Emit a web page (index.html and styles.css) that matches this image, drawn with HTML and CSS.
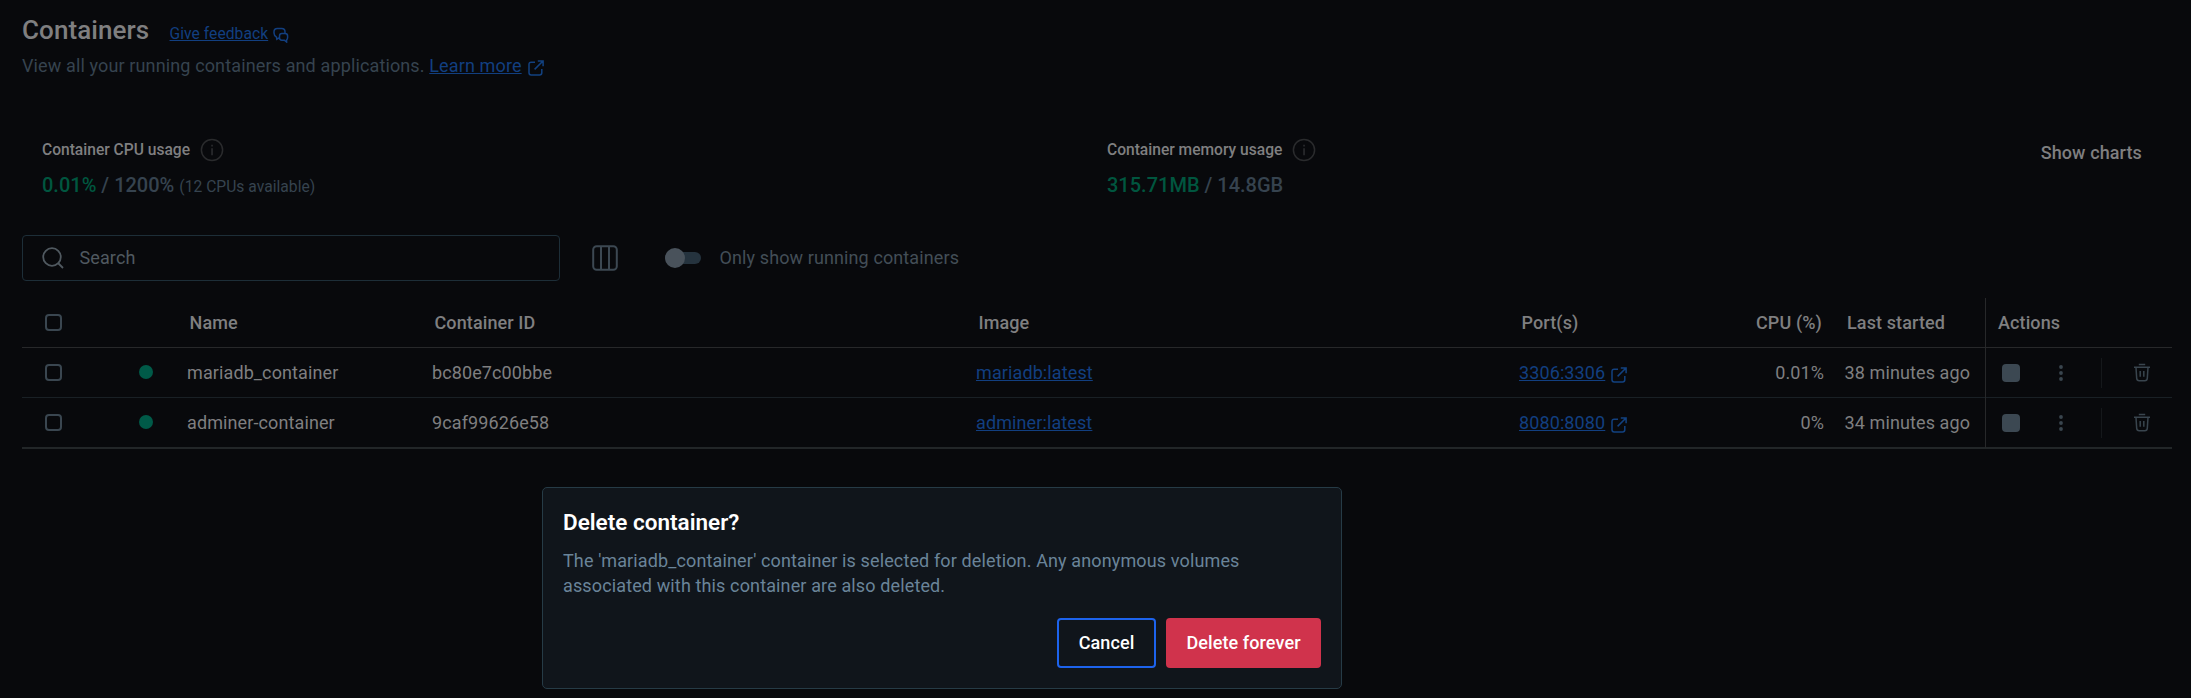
FILE: index.html
```
<!DOCTYPE html>
<html lang="en">
<head>
<meta charset="utf-8">
<title>Containers</title>
<link rel="stylesheet" href="styles.css">
</head>
<body>
<svg class="defs" width="0" height="0">
  <symbol id="external" viewBox="0 0 16 16" fill="none" stroke="currentColor" stroke-width="1.5"><path d="M7 2.2H3.2Q1 2.2 1 4.4V12.8Q1 15 3.2 15H11.6Q13.8 15 13.8 12.8V9M9.8 .9H15.1V6.2M15 1L6.6 9.4"/></symbol>
  <symbol id="info" viewBox="0 0 24 24"><circle cx="12" cy="12" r="10.6" fill="none" stroke="currentColor" stroke-width="1.5"/><path fill="currentColor" d="M11.2 10.2h1.7v7h-1.7zM11.2 6.8h1.7v1.8h-1.7z"/></symbol>
  <symbol id="trash" viewBox="0 0 18 20" fill="none" stroke="currentColor" stroke-width="1.5"><path d="M1 4.2H17M5.8 1.6H12.2M3 4.5L3.7 15.4Q3.9 17.7 6.2 17.7H11.8Q14.1 17.7 14.3 15.4L15 4.5M7.2 8V13.7M10.8 8V13.7"/></symbol>
  <symbol id="dots" viewBox="0 0 6 18" fill="currentColor"><circle cx="3" cy="3" r="1.9"/><circle cx="3" cy="9" r="1.9"/><circle cx="3" cy="15" r="1.9"/></symbol>
</svg>
<main class="page">
  <header class="heading">
    <h1>Containers</h1>
    <a class="feedback">Give feedback</a>
    <svg class="feedback-icon" viewBox="0 0 16 16" fill="none" stroke="currentColor" stroke-width="1.5"><path d="M6 10.8L3.8 12.2L3.5 10.2Q1 8.6 1 6V4.8Q1 1.5 4.3 1.5H8.8Q12 1.5 12 4.8V6M8.8 6.6H12.2Q14.6 6.6 14.6 9V10.6Q14.6 12.2 13.6 12.8V15L11.4 13.2H8.8Q6.5 13.2 6.5 10.8V9Q6.5 6.6 8.8 6.6Z"/></svg>
  </header>
  <p class="subtitle">View all your running containers and applications. <a>Learn more</a><svg class="ext"><use href="#external"/></svg></p>

  <section class="stats">
    <div class="stat cpu">
      <div class="stat-label">Container CPU usage<svg class="info"><use href="#info"/></svg></div>
      <div class="stat-value"><b>0.01%</b> / 1200% <small>(12 CPUs available)</small></div>
    </div>
    <div class="stat mem">
      <div class="stat-label">Container memory usage<svg class="info"><use href="#info"/></svg></div>
      <div class="stat-value"><b>315.71MB</b> / 14.8GB</div>
    </div>
    <div class="show-charts">Show charts</div>
  </section>

  <section class="toolbar">
    <div class="search">
      <svg width="22" height="22" viewBox="0 0 22 22" fill="none" stroke="currentColor" stroke-width="1.8"><circle cx="10" cy="10" r="8.8"/><path d="M16 16L21 21"/></svg>
      <span>Search</span>
    </div>
    <svg class="columns" width="26" height="26" viewBox="0 0 26 26" fill="none" stroke="currentColor" stroke-width="2"><rect x="1.2" y="1.2" width="23.6" height="23.6" rx="3.5"/><path d="M9 1.5V24.5M17 1.5V24.5"/></svg>
    <div class="toggle"><i></i></div>
    <span class="toggle-label">Only show running containers</span>
  </section>

  <section class="table">
    <div class="row head">
      <div class="check"><i></i></div><div></div><div>Name</div><div>Container ID</div><div>Image</div><div>Port(s)</div><div class="num">CPU (%)</div><div class="started">Last started</div><div class="actions">Actions</div>
    </div>
    <div class="row">
      <div class="check"><i></i></div><div class="status"><i></i></div><div>mariadb_container</div><div>bc80e7c00bbe</div><div><a>mariadb:latest</a></div><div><a>3306:3306</a><svg class="ext"><use href="#external"/></svg></div><div class="num">0.01%</div><div class="started">38 minutes ago</div>
      <div class="actions"><i class="stop"></i><svg class="more"><use href="#dots"/></svg><i class="sep"></i><svg class="trash"><use href="#trash"/></svg></div>
    </div>
    <div class="row last">
      <div class="check"><i></i></div><div class="status"><i></i></div><div>adminer-container</div><div>9caf99626e58</div><div><a>adminer:latest</a></div><div><a>8080:8080</a><svg class="ext"><use href="#external"/></svg></div><div class="num">0%</div><div class="started">34 minutes ago</div>
      <div class="actions"><i class="stop"></i><svg class="more"><use href="#dots"/></svg><i class="sep"></i><svg class="trash"><use href="#trash"/></svg></div>
    </div>
  </section>
</main>

<div class="dialog" role="dialog">
  <h2>Delete container?</h2>
  <p>The 'mariadb_container' container is selected for deletion. Any anonymous volumes<br>associated with this container are also deleted.</p>
  <div class="buttons"><button class="cancel">Cancel</button><button class="delete">Delete forever</button></div>
</div>
</body>
</html>
```
FILE: styles.css
```
* { box-sizing: border-box; }
body {
  margin: 0;
  height: 698px;
  overflow: hidden;
  background: #08090c;
  color: #7f7f80;
  font: 18px/25px Roboto, sans-serif;
  letter-spacing: .11px;
}
svg { display: block; flex: none; }
.defs { position: absolute; }
h1, h2, p { margin: 0; }
a { color: #123f80; text-decoration: underline; text-underline-offset: 1px; text-decoration-thickness: 1px; }

.page { padding: 14px 19px 0 22px; }
.heading { display: flex; height: 38px; align-items: flex-start; }
h1 { font-size: 26px; line-height: 32px; font-weight: 500; width: 147.5px; letter-spacing: .08px; }
.feedback { font-size: 15.6px; line-height: 20px; margin-top: 10px; letter-spacing: .06px; }
.feedback-icon { width: 16px; height: 16px; margin: 13px 0 0 5px; color: #123f80; }
.subtitle { display: flex; height: 70px; color: #36434f; white-space: pre; padding-top: 1px; letter-spacing: .13px; }
.ext { width: 16px; height: 16px; margin: 7px 0 0 6px; color: #124180; }

.stats { display: flex; height: 98px; padding: 15px 30px 0 20px; }
.cpu { width: 1065px; }
.mem { flex: 1; }
.stat-label { display: flex; align-items: center; height: 26px; font-size: 15.6px; font-weight: 500; letter-spacing: -.01px; }
.info { width: 24px; height: 24px; margin-left: 10px; color: #2a2b2d; }
.stat-value { font-size: 20px; font-weight: 500; line-height: 28px; margin-top: 8px; color: #36434f; letter-spacing: 0; }
.stat-value b { font-weight: 500; color: #00563f; }
.stat-value small { font-size: 15.6px; font-weight: 400; letter-spacing: .03px; }
.show-charts { font-weight: 500; padding-top: 3px; }

.toolbar { display: flex; align-items: center; height: 46px; margin-top: 15px; color: #434e57; }
.search { width: 538px; height: 46px; border: 1px solid #1d2e38; border-radius: 4px; display: flex; align-items: center; padding-left: 19px; gap: 15.5px; color: #505960; }
.search span, .toggle-label { padding-bottom: 2px; }
.columns { margin-left: 32px; color: #3c4852; }
.toggle { width: 36px; height: 12px; border-radius: 6px; background: #25333e; margin: 0 18.5px 0 47px; display: flex; align-items: center; }
.toggle i { width: 20px; height: 20px; border-radius: 50%; background: #49525b; }

.table { margin-top: 17px; }
.row { display: grid; grid-template-columns: 94px 71px 245px 544px 543px 224px 81px 161px 1fr; height: 50px; border-bottom: 1px solid #192025; }
.row > div { display: flex; align-items: center; height: 49px; }
.head { font-weight: 500; border-color: #27282a; }
.head > div:nth-child(n+3):nth-child(-n+6) { padding-left: 2.5px; }
.last { height: 51px; border-bottom: 2px solid #222628; }
.row > .check { padding-left: 22.5px; padding-bottom: 1px; }
.check i { width: 17px; height: 17px; border: 2px solid #3a4650; border-radius: 4px; }
.row > .status { padding-left: 22.5px; padding-bottom: 1px; }
.status i { width: 14px; height: 14px; border-radius: 50%; background: #005a48; }
.row .ext { margin-top: 4px; }
.row .num { justify-content: flex-end; }
.head .num { padding-right: 2px; }
.row .started { padding-left: 20.5px; }
.head .started { padding-left: 23px; }
.row > .actions { border-left: 1px solid #27282a; padding: 0 0 1px 16px; height: 50px; color: #39454e; }
.head > .actions { padding: 0 0 1px 12px; color: inherit; }
.stop { width: 18px; height: 18px; border-radius: 4px; background: #3c4852; }
.more { width: 6px; height: 18px; margin-left: 38px; }
.sep { width: 1px; height: 30px; background: #15181b; margin-left: 37px; }
.trash { width: 18px; height: 20px; margin-left: 31px; }

.dialog { position: absolute; left: 542px; top: 487px; width: 800px; height: 202px; padding: 20px; background: #10151b; border: 1px solid #263b46; border-radius: 5px; }
.dialog h2 { font-size: 22.5px; line-height: 29px; font-weight: 600; color: #fff; letter-spacing: 0; }
.dialog p { color: #6a8499; padding-top: 11px; height: 62px; letter-spacing: .13px; }
.buttons { display: flex; justify-content: flex-end; gap: 10px; margin-top: 19px; }
button { height: 50px; border: 0; border-radius: 4px; padding: 0 0 2px; color: #fff; font: 500 18px/25px Roboto, sans-serif; letter-spacing: .1px; }
.cancel { width: 99px; border: 2px solid #1d63ed; background: #10151b; }
.delete { width: 155px; background: #d0334c; }
```
